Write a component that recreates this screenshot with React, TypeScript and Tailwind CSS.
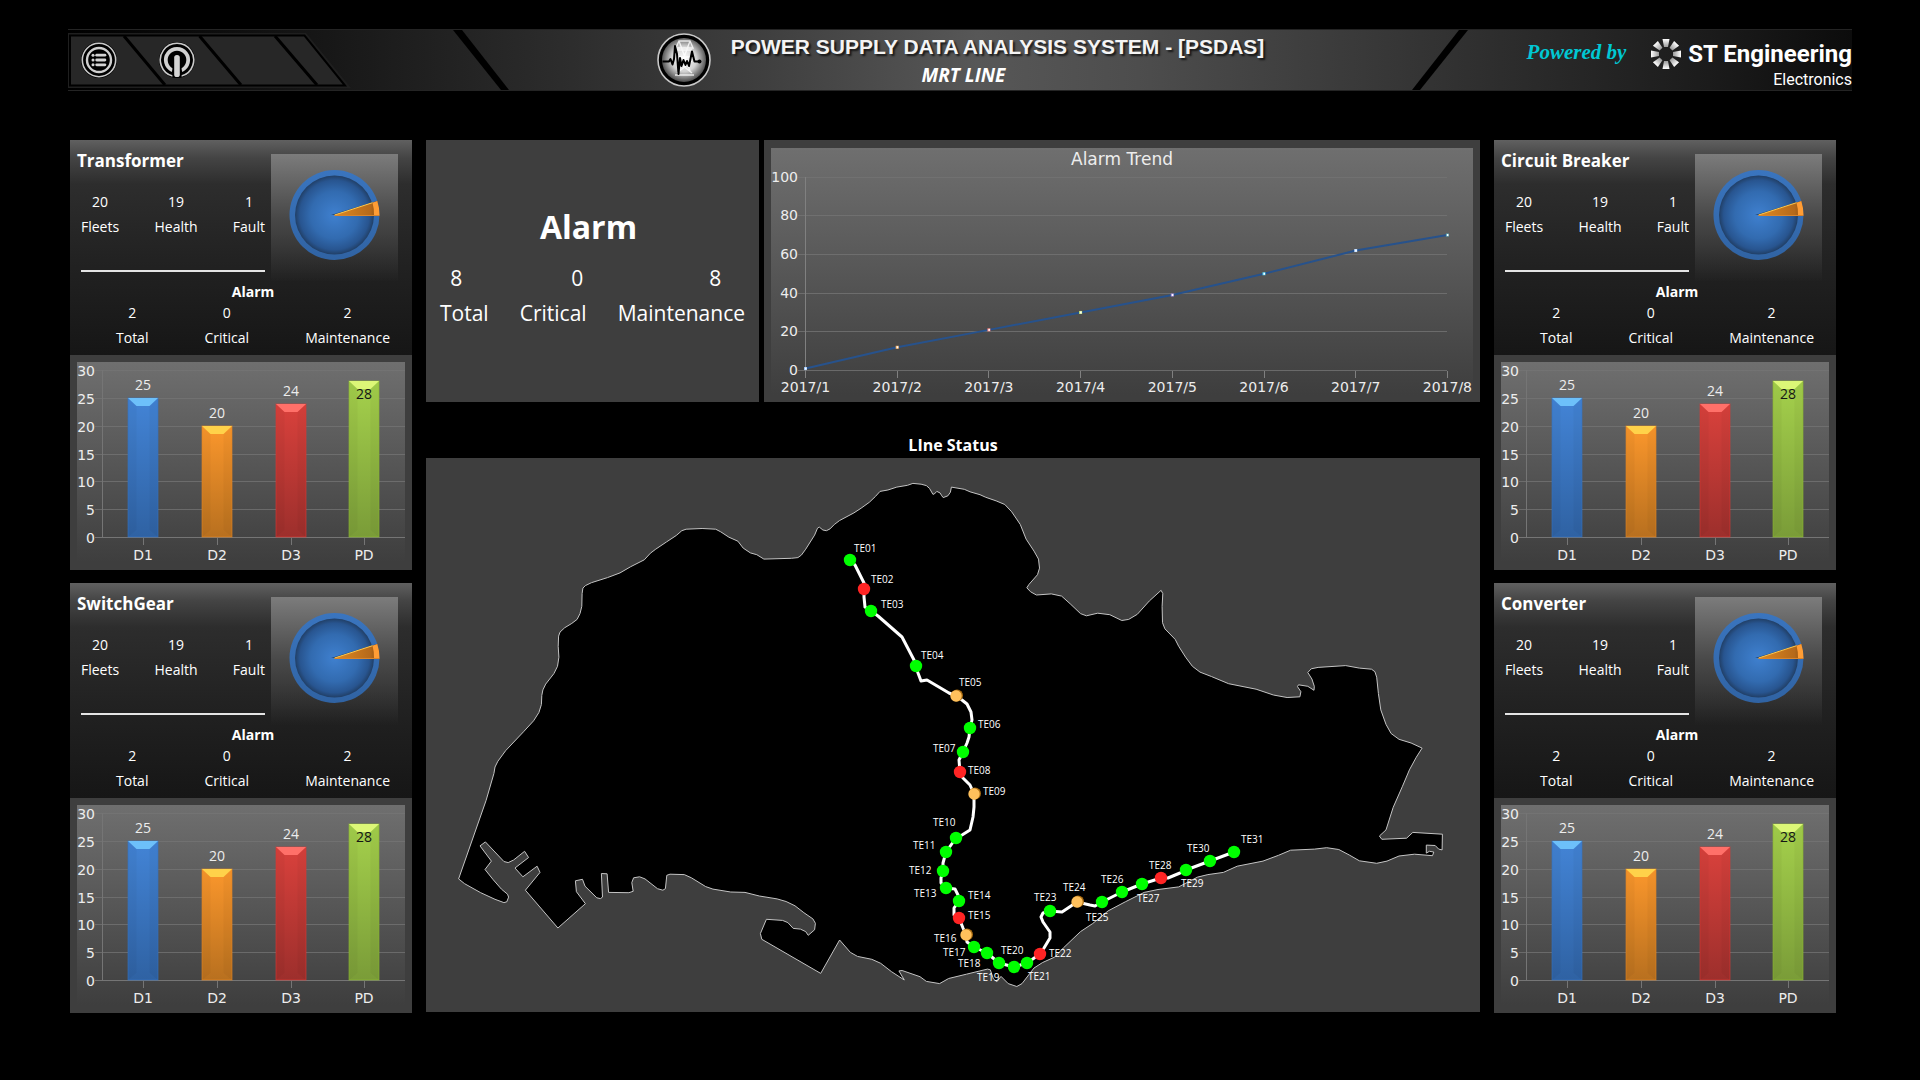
import React, { useId } from "react";

type Pt = [number, number];

/* ---------- Header pieces ---------- */

function MenuIcon() {
  return (
    <svg viewBox="0 0 36 36" className="size-9" aria-hidden="true">
      <circle cx="18" cy="18" r="18" fill="#000" />
      <circle cx="18" cy="18" r="16.7" fill="none" stroke="#c9c9c9" strokeWidth="1.6" />
      <circle cx="18" cy="18" r="12" fill="none" stroke="#cfcfcf" strokeWidth="2.4" />
      {[13.2, 18, 22.8].map((y) => (
        <g key={y} fill="#d4d4d4">
          <circle cx="12" cy={y} r="1.5" />
          <rect x="14.3" y={y - 1.4} width="11" height="2.8" rx="1.4" />
        </g>
      ))}
    </svg>
  );
}

function PowerIcon() {
  return (
    <svg viewBox="0 0 36 36" className="size-9" aria-hidden="true">
      <circle cx="18" cy="18" r="18" fill="#000" />
      <path d="M13.5 34.1A16.7 16.7 0 1 1 22.5 34.1" fill="none" stroke="#c9c9c9" strokeWidth="1.6" />
      <path d="M13.4 28.2A11.2 11.2 0 1 1 22.6 28.2" fill="none" stroke="#d0d0d0" strokeWidth="3.8" />
      <rect x="13.4" y="11.5" width="9.2" height="24.5" rx="4" fill="#000" />
      <rect x="15.2" y="13" width="5.6" height="22" rx="2.6" fill="#d4d4d4" />
    </svg>
  );
}

function Medallion() {
  return (
    <svg viewBox="0 0 54 54" className="size-[54px] shrink-0" aria-hidden="true">
      <defs>
        <radialGradient id="medal" cx="50%" cy="48%" r="52%">
          <stop offset="0" stopColor="#fff" />
          <stop offset="0.55" stopColor="#d2d2d2" />
          <stop offset="1" stopColor="#4a4a4a" />
        </radialGradient>
      </defs>
      <circle cx="27" cy="27" r="26" fill="#000" stroke="#c8c8c8" strokeWidth="1.6" />
      <circle cx="27" cy="27" r="22" fill="url(#medal)" />
      <g stroke="#fff" strokeWidth="1.4" fill="none" opacity="0.8">
        <path d="M22 8h11l3 7H19zM22 8l11 30M33 8L22 38M20 17h15M21 24h13M20 40l15-12M35 40L20 28M18 42h19" />
      </g>
      <path
        d="M5.500 28.500H12l1.500-2.500 2 5.500L17 26l1-13 2 8 1.500 20L23 25l1.500 8 2-6 2 5 1.500-4 2 5 3-14.500 2.500 10H42"
        fill="none"
        stroke="#000"
        strokeWidth="2"
        strokeLinejoin="round"
      />
      <circle cx="42.500" cy="28.500" r="2" fill="#000" />
    </svg>
  );
}

function PetalLogo() {
  return (
    <svg viewBox="0 0 32 32" className="size-8 shrink-0" aria-hidden="true">
      <defs>
        <linearGradient id="petal" x1="0" y1="0" x2="0" y2="1">
          <stop offset="0" stopColor="#fff" />
          <stop offset="1" stopColor="#9a9a9a" />
        </linearGradient>
      </defs>
      {[0, 45, 90, 135, 180, 225, 270, 315].map((a) => (
        <path key={a} d="M12.500 1h7l-1.500 8h-4z" fill="url(#petal)" transform={`rotate(${a} 16 16)`} />
      ))}
    </svg>
  );
}

function Header() {
  return (
    <header className="mx-[68px] flex h-[62px] items-stretch border-y border-[#242424] bg-[linear-gradient(90deg,#000_0%,#0a0a0a_6%,#1b1b1b_17%,#2b2b2b_27%,#3d3d3d_38%,#575757_51%,#4d4d4d_60%,#3a3a3a_72%,#2c2c2c_81%,#1b1b1b_92%,#0c0c0c_100%)]">
      <nav className="relative w-[385px] shrink-0">
        <svg viewBox="0 0 285 60" className="absolute left-0 top-0 h-[60px] w-[285px]" aria-hidden="true">
          <path d="M0 3H238L283 58H0Z" fill="#1f1f1f" />
          <path d="M2 5.500H236.500L277 55.500H2Z" fill="#272727" stroke="#000" strokeWidth="2" />
          <path d="M56 6L97 55M131.500 6L173 55M207 6L249 55" stroke="#000" strokeWidth="3" />
        </svg>
        <div className="relative flex h-full items-center gap-[42px] pl-[13px]">
          <button type="button" aria-label="Menu" className="rounded-full">
            <MenuIcon />
          </button>
          <button type="button" aria-label="Power" className="rounded-full">
            <PowerIcon />
          </button>
        </div>
      </nav>
      <svg viewBox="0 0 56 60" className="h-[60px] w-14 shrink-0" aria-hidden="true">
        <path d="M0 0H9L56 60H48Z" fill="#000" />
      </svg>
      <div className="flex min-w-0 flex-1 items-center justify-center gap-5">
        <Medallion />
        <div className="text-center">
          <h1 className="whitespace-nowrap pt-0.5 font-['Liberation_Sans'] text-[21px] font-bold leading-7 text-[#f4f4f4] [text-shadow:2px_2px_2px_rgba(0,0,0,0.7)]">
            POWER SUPPLY DATA ANALYSIS SYSTEM - [PSDAS]
          </h1>
          <p className="pr-[68px] text-[19px] font-bold italic leading-7">MRT LINE</p>
        </div>
      </div>
      <svg viewBox="0 0 56 60" className="h-[60px] w-14 shrink-0" aria-hidden="true">
        <path d="M56 0H47L0 60H8Z" fill="#000" />
      </svg>
      <div className="flex w-[384px] shrink-0 justify-end">
        <span className="mr-6 mt-1.5 whitespace-nowrap font-['Brush_Script_MT','Liberation_Serif',cursive] text-[21px] font-bold italic leading-8 text-[#00c8d4]">
          Powered by
        </span>
        <div className="mt-2">
          <PetalLogo />
        </div>
        <div className="ml-1.5 mt-2 text-right font-['Liberation_Sans_Narrow','Roboto',sans-serif] text-white">
          <div className="whitespace-nowrap text-[24px] font-bold leading-8">ST Engineering</div>
          <div className="text-[16px] leading-5">Electronics</div>
        </div>
      </div>
    </header>
  );
}

/* ---------- Equipment cards ---------- */

function Pie() {
  const id = useId();
  return (
    <svg viewBox="0 0 127 128" className="h-32 w-[127px]" role="img" aria-label="19 healthy, 1 fault">
      <defs>
        <radialGradient id={id + "core"}>
          <stop offset="0" stopColor="#3f80cf" />
          <stop offset="0.6" stopColor="#326bb0" />
          <stop offset="0.88" stopColor="#285590" />
          <stop offset="1" stopColor="#213f66" />
        </radialGradient>
        <linearGradient id={id + "rim"} x1="0" y1="0" x2="0" y2="1">
          <stop offset="0" stopColor="#3a75bf" />
          <stop offset="1" stopColor="#3063a3" />
        </linearGradient>
        <linearGradient id={id + "slice"}>
          <stop offset="0" stopColor="#e08a22" />
          <stop offset="0.8" stopColor="#b5691a" />
          <stop offset="1" stopColor="#8a4f12" />
        </linearGradient>
      </defs>
      <circle cx="63.500" cy="61" r="45" fill={`url(#${id}rim)`} />
      <circle cx="63.500" cy="61" r="39.500" fill={`url(#${id}core)`} />
      <path d="M60 61L106.300 47A45 45 0 0 1 108.500 61Z" fill="#1f3f68" />
      <path d="M63.500 61L106.300 47.100A45 45 0 0 1 108.500 61Z" fill={`url(#${id}slice)`} />
      <path d="M101.500 48.700L106.300 47.100A45 45 0 0 1 108.500 61H103A39.500 39.500 0 0 0 101.500 48.700Z" fill="#ff9d35" />
      <path d="M63.500 61L101.500 48.700" stroke="#ffc94d" strokeWidth="1" />
      <path d="M63.500 61.500H108.500" stroke="#d9842a" strokeWidth="1" />
    </svg>
  );
}

const BARS = [
  { name: "D1", value: 25, top: "#4384d6", bottom: "#2f62a3", edge: "#3575c4", cap: "#6dc0fa" },
  { name: "D2", value: 20, top: "#fb972c", bottom: "#b8701f", edge: "#e98a25", cap: "#ffd24a" },
  { name: "D3", value: 24, top: "#d9413c", bottom: "#9d2f2c", edge: "#e03a35", cap: "#ff7069" },
  { name: "PD", value: 28, top: "#a5d14c", bottom: "#7a9c38", edge: "#90c030", cap: "#dcf777" },
];

function BarChart() {
  const id = useId();
  const base = 182;
  const yOf = (v: number) => Math.round(base - v * 5.56);
  return (
    <svg viewBox="0 0 342 215" className="block w-full bg-[#3e3e3e]" role="img" aria-label="Bar chart D1 to PD">
      <defs>
        <linearGradient id={id + "bg"} x1="0" y1="0" x2="0" y2="1">
          <stop offset="0" stopColor="#6f6f6f" />
          <stop offset="1" stopColor="#3e3e3e" />
        </linearGradient>
        {BARS.map((b) => (
          <linearGradient key={b.name} id={id + b.name} x1="0" y1="0" x2="0" y2="1">
            <stop offset="0" stopColor={b.top} />
            <stop offset="1" stopColor={b.bottom} />
          </linearGradient>
        ))}
      </defs>
      <rect x="7" y="7" width="328" height="200" fill={`url(#${id}bg)`} />
      {[0, 5, 10, 15, 20, 25, 30].map((v) => (
        <g key={v}>
          <path d={`M25 ${yOf(v) + 0.5}H335`} stroke="#757575" strokeWidth="1" opacity={v === 0 ? 1 : 0.75} />
          <text x="25" y={yOf(v) + 6} textAnchor="end" className="fill-[#ededed] font-['DejaVu_Sans'] text-[14px]">
            {v}
          </text>
        </g>
      ))}
      <path d="M32.500 15V183" stroke="#757575" />
      {BARS.map((b, i) => {
        const cx = Math.round(73.3 + i * 73.7);
        const y = yOf(b.value);
        const l = cx - 15;
        const r = cx + 15;
        return (
          <g key={b.name}>
            <path d={`M${cx}.5 183V190`} stroke="#757575" />
            <rect x={l} y={y} width="30" height={182 - y} fill={`url(#${id}${b.name})`} stroke={b.edge} strokeOpacity="0.6" />
            <path d={`M${l + 8.5} ${y + 8}V175L${l} 182V${y}ZM${r - 8.5} ${y + 8}V175L${r} 182V${y}Z`} fill="#000" opacity="0.03" />
            <path d={`M${l} ${y}H${r}L${r - 8.5} ${y + 8}H${l + 8.5}Z`} fill={b.cap} />
            <text
              x={cx}
              y={b.name === "PD" ? y + 18 : y - 8}
              textAnchor="middle"
              className={b.name === "PD" ? "fill-[#151515] text-[14px]" : "fill-[#ededed] text-[14px]"}
            >
              {b.value}
            </text>
            <text x={cx} y="205" textAnchor="middle" className="fill-[#ededed] font-['DejaVu_Sans'] text-[14px]">
              {b.name}
            </text>
          </g>
        );
      })}
    </svg>
  );
}

function Stat({ value, label }: { value: number; label: string }) {
  return (
    <div className="flex flex-col-reverse items-center gap-[5px]">
      <dt>{label}</dt>
      <dd>{value}</dd>
    </div>
  );
}

function EquipmentCard({ title }: { title: string }) {
  return (
    <section className="flex flex-col text-[14px] leading-5">
      <div className="h-[215px] bg-[linear-gradient(180deg,#606060_0px,#444_18px,#2d2d2d_44px,#222_120px,#161616_215px)]">
        <div className="flex justify-between pr-3.5">
          <div className="w-[195px]">
            <h2 className="pl-[7px] pt-[9px] text-[17px] font-bold leading-6">{title}</h2>
            <dl className="ml-[11px] mt-[19px] flex justify-between">
              <Stat value={20} label="Fleets" />
              <Stat value={19} label="Health" />
              <Stat value={1} label="Fault" />
            </dl>
            <hr className="ml-[11px] mt-[33px] border-t-2 border-[#e4e4e4]" />
          </div>
          <div className="mt-3.5 bg-linear-to-b from-[#7c7c7c] via-[#484848] to-transparent">
            <Pie />
          </div>
        </div>
        <h3 className="pl-6 text-center font-bold">Alarm</h3>
        <dl className="mt-px flex justify-between pl-[46px] pr-[22px]">
          <Stat value={2} label="Total" />
          <Stat value={0} label="Critical" />
          <Stat value={2} label="Maintenance" />
        </dl>
      </div>
      <BarChart />
    </section>
  );
}

/* ---------- Alarm summary and trend ---------- */

const TREND = [
  { month: "2017/1", value: 1, dot: "#9cc4f5" },
  { month: "2017/2", value: 12, dot: "#ffb45e" },
  { month: "2017/3", value: 21, dot: "#ff7d78" },
  { month: "2017/4", value: 30, dot: "#c8ea7c" },
  { month: "2017/5", value: 39, dot: "#a58be0" },
  { month: "2017/6", value: 50, dot: "#4fd0f0" },
  { month: "2017/7", value: 62, dot: "#b8d8ff" },
  { month: "2017/8", value: 70, dot: "#5aa9b8" },
];

function TrendChart() {
  const x = (i: number) => 41.5 + i * 91.7;
  const y = (v: number) => 230.5 - v * 1.935;
  return (
    <svg viewBox="0 0 716 262" className="block h-[262px] w-full bg-[#3e3e3e]" role="img" aria-label="Alarm Trend">
      <defs>
        <linearGradient id="trendBg" x1="0" y1="0" x2="0" y2="1">
          <stop offset="0" stopColor="#6f6f6f" />
          <stop offset="1" stopColor="#3e3e3e" />
        </linearGradient>
      </defs>
      <rect x="7" y="8" width="702" height="247" fill="url(#trendBg)" />
      <text x="358" y="25" textAnchor="middle" className="fill-[#ededed] font-['DejaVu_Sans'] text-[17px]">
        Alarm Trend
      </text>
      {[0, 20, 40, 60, 80, 100].map((v) => (
        <g key={v}>
          <path d={`M34 ${Math.floor(y(v)) + 0.5}H683`} stroke="#747474" opacity="0.8" />
          <text x="34" y={Math.floor(y(v)) + 5} textAnchor="end" className="fill-[#ededed] font-['DejaVu_Sans'] text-[14px]">
            {v}
          </text>
        </g>
      ))}
      <path d="M41.500 37V231" stroke="#808080" />
      <polyline points={TREND.map((t, i) => `${x(i)},${y(t.value)}`).join(" ")} fill="none" stroke="#27528c" strokeWidth="2" />
      {TREND.map((t, i) => (
        <g key={t.month}>
          <path d={`M${Math.floor(x(i)) + 0.5} 231V238`} stroke="#808080" />
          <rect x={x(i) - 1.5} y={y(t.value) - 1.5} width="3" height="3" fill={t.dot} />
          <rect x={x(i) - 0.5} y={y(t.value) - 1} width="1.500" height="2" fill="#fff" />
          <text x={x(i)} y="252" textAnchor="middle" className="fill-[#ededed] font-['DejaVu_Sans'] text-[14px]">
            {t.month}
          </text>
        </g>
      ))}
    </svg>
  );
}

function AlarmSummary() {
  const items = [
    { label: "Total", value: 8, pad: "pr-4" },
    { label: "Critical", value: 0, pad: "pl-12" },
    { label: "Maintenance", value: 8, pad: "pl-[68px]" },
  ];
  return (
    <section className="bg-[#3e3e3e] px-3.5 pt-16 text-[21px] leading-7">
      <h2 className="pr-2 text-center text-[32px] font-bold leading-[46px]">Alarm</h2>
      <dl className="mt-3.5 flex justify-between">
        {items.map((it) => (
          <div key={it.label} className="flex flex-col-reverse gap-[7px] text-center">
            <dt>{it.label}</dt>
            <dd className={it.pad}>{it.value}</dd>
          </div>
        ))}
      </dl>
    </section>
  );
}

/* ---------- Line status map ---------- */

const WEST_COAST: Pt[] = [
  [1568, 123], [1540, 115], [1524, 108], [1488, 102], [1485, 116], [1478, 126], [1465, 131], [1461, 126], [1456, 118],
  [1447, 114], [1440, 121], [1436, 122], [1427, 106], [1418, 98], [1403, 94], [1380, 92], [1365, 97], [1335, 102],
  [1310, 110], [1288, 114], [1275, 128], [1258, 144], [1235, 160], [1215, 173], [1175, 194], [1160, 205], [1148, 217],
  [1138, 222], [1128, 220], [1118, 212], [1113, 215], [1105, 234], [1080, 273], [1068, 289], [1058, 296], [1040, 298],
  [963, 300], [943, 288], [925, 283], [905, 270], [890, 251], [865, 240], [842, 225], [828, 218], [790, 216], [745, 218],
  [733, 222], [718, 235], [690, 253], [660, 273], [645, 284], [628, 302], [590, 321], [560, 338], [525, 351], [480, 365],
  [463, 373], [456, 380], [454, 395], [453, 430], [448, 450], [440, 466], [425, 477], [405, 489], [392, 501], [388, 512],
  [387, 540], [389, 570], [385, 595], [375, 615], [352, 644], [344, 660], [341, 675], [340, 700], [333, 722], [318, 745],
  [290, 775], [240, 827], [218, 856], [210, 872], [207, 890], [185, 964], [108, 1180], [125, 1193], [170, 1218],
  [210, 1236], [235, 1245], [243, 1243], [248, 1230], [245, 1222], [228, 1208], [205, 1182], [182, 1154], [200, 1131],
  [168, 1089], [183, 1078], [235, 1132], [247, 1135], [262, 1128], [293, 1104], [304, 1121], [266, 1150], [288, 1174],
  [328, 1145], [336, 1162], [295, 1211], [386, 1315], [463, 1248], [438, 1215], [435, 1185], [455, 1181], [462, 1200],
  [495, 1232], [505, 1234], [511, 1230], [508, 1165], [524, 1166], [528, 1217], [585, 1218], [597, 1214], [593, 1190],
  [598, 1177], [615, 1174], [630, 1180], [665, 1207], [680, 1211], [687, 1207], [691, 1170], [700, 1167], [740, 1168],
  [760, 1177], [800, 1201], [820, 1208], [870, 1216], [910, 1217], [950, 1227], [1000, 1235], [1025, 1242], [1050, 1254],
  [1075, 1273], [1100, 1290], [1107, 1302], [1105, 1320], [1087, 1335], [1080, 1325], [1065, 1318], [1045, 1316],
  [1030, 1300], [1015, 1294], [970, 1291], [953, 1330], [957, 1346], [1122, 1440], [1175, 1348], [1205, 1382],
  [1225, 1393], [1265, 1401], [1290, 1412], [1320, 1435], [1356, 1458], [1341, 1433], [1350, 1432], [1400, 1449],
  [1418, 1462], [1455, 1468], [1480, 1454], [1530, 1442], [1568, 1433],
];

const EAST_COAST: Pt[] = [
  [80, 1428], [88, 1430], [97, 1455], [107, 1463], [119, 1448], [140, 1468], [165, 1476], [180, 1468], [215, 1425],
  [240, 1410], [275, 1395], [300, 1370], [350, 1325], [385, 1303], [430, 1268], [480, 1243], [535, 1217], [575, 1209],
  [635, 1202], [690, 1175], [720, 1168], [765, 1162], [805, 1145], [880, 1131], [925, 1115], [960, 1101], [1030, 1098],
  [1065, 1094], [1100, 1099], [1130, 1114], [1160, 1130], [1210, 1137], [1240, 1131], [1275, 1117], [1320, 1112],
  [1372, 1116], [1376, 1106], [1363, 1104], [1354, 1109], [1354, 1087], [1380, 1088], [1390, 1098], [1400, 1100],
  [1401, 1057], [1315, 1052], [1297, 1068], [1225, 1071], [1218, 1062], [1237, 1045], [1258, 983], [1285, 925],
  [1305, 880], [1325, 845], [1342, 820], [1310, 806], [1275, 796], [1252, 780], [1237, 755], [1222, 715], [1215, 670],
  [1210, 625], [1205, 610], [1195, 603], [1160, 600], [1120, 593], [1040, 598], [1020, 602], [1010, 612], [1022, 630],
  [1029, 650], [1028, 661], [1010, 650], [983, 646], [980, 651], [990, 665], [987, 679], [950, 681], [910, 674],
  [860, 658], [780, 643], [730, 623], [697, 611], [675, 595], [655, 570], [635, 540], [625, 521], [595, 492], [588, 475],
  [587, 430], [589, 395], [584, 386], [550, 415], [515, 452], [490, 466], [470, 469], [435, 453], [400, 449], [367, 456],
  [350, 450], [320, 423], [295, 402], [265, 396], [222, 399], [205, 390], [194, 379], [200, 370], [225, 343], [231, 325],
  [228, 300], [215, 278], [192, 245], [175, 205], [150, 170], [130, 150], [105, 140], [75, 130],
];

const project = (pts: Pt[], offset: number, scale: number) =>
  pts.map(([px, py]) => `${(offset + px / scale).toFixed(1)},${(py / 2.751 - 9).toFixed(1)}`);

const COAST = [...project(WEST_COAST, -6, 2.8), ...project(EAST_COAST, 534, 2.904)].join(" ");

const TRACK =
  "424,101 429,106 438,124 438,138 439,148 445,152 452,157 476,178 488,201 492,214 495,222 501,221 523,234 530,237 536,241 541,245 545,253 546,261 544,269 543,278 541,284 537,293 533,301 534,313 537,319 544,326 548,335 548,348 547,358 544,371 536,376 530,379 520,393 517,404 517,412 515,419 515,424 520,429 529,430 532,436 533,442 528,449 528,456 533,459 537,469 540,476 541,483 548,488 561,494 573,504 588,508 601,504 614,495 618,489 624,479 624,473 617,463 615,458 617,454 624,452 636,453 651,443 664,446 669,447 676,443 696,433 716,425 735,419 742,419 754,414 760,411 784,402 808,393";

const OK = "#00ff00";
const BAD = "#ff2424";
const WARN = "#ffc05c";

/* code, dot x, dot y, label x, label baseline, state */
const STATIONS: [string, number, number, number, number, string][] = [
  ["TE01", 424, 101, 428, 93, OK],
  ["TE02", 438, 130, 445, 124, BAD],
  ["TE03", 445, 152, 455, 149, OK],
  ["TE04", 490, 207, 495, 200, OK],
  ["TE05", 530, 237, 533, 227, WARN],
  ["TE06", 544, 269, 552, 269, OK],
  ["TE07", 537, 293, 507, 293, OK],
  ["TE08", 534, 313, 542, 315, BAD],
  ["TE09", 548, 335, 557, 336, WARN],
  ["TE10", 530, 379, 507, 367, OK],
  ["TE11", 520, 393, 487, 390, OK],
  ["TE12", 517, 412, 483, 415, OK],
  ["TE13", 520, 429, 488, 438, OK],
  ["TE14", 533, 442, 542, 440, OK],
  ["TE15", 533, 459, 542, 460, BAD],
  ["TE16", 540, 476, 508, 483, WARN],
  ["TE17", 548, 488, 517, 497, OK],
  ["TE18", 561, 494, 532, 508, OK],
  ["TE19", 573, 504, 551, 522, OK],
  ["TE20", 588, 508, 575, 495, OK],
  ["TE21", 601, 504, 602, 521, OK],
  ["TE22", 614, 495, 623, 498, BAD],
  ["TE23", 624, 452, 608, 442, OK],
  ["TE24", 651, 443, 637, 432, WARN],
  ["TE25", 676, 443, 660, 462, OK],
  ["TE26", 696, 433, 675, 424, OK],
  ["TE27", 716, 425, 711, 443, OK],
  ["TE28", 735, 419, 723, 410, BAD],
  ["TE29", 760, 411, 755, 428, OK],
  ["TE30", 784, 402, 761, 393, OK],
  ["TE31", 808, 393, 815, 384, OK],
];

function LineMap() {
  return (
    <svg viewBox="0 -1 1054 554" className="block h-[554px] w-full bg-[#3e3e3e]" role="img" aria-label="Line status map">
      <polygon points={COAST} fill="#000" stroke="#c4c4c4" strokeWidth="1" strokeLinejoin="round" />
      <polyline points={TRACK} fill="none" stroke="#fff" strokeWidth="3" strokeLinejoin="round" />
      {STATIONS.map(([code, cx, cy, lx, ly, fill]) => (
        <g key={code}>
          {fill === WARN && <circle cx={cx + 1} cy={cy - 0.5} r="6" fill="#a86a10" />}
          <circle cx={cx} cy={cy} r={fill === WARN ? 5.7 : 6.2} fill={fill} />
          <text x={lx} y={ly} className="fill-white text-[10px]">
            {code}
          </text>
        </g>
      ))}
    </svg>
  );
}

export default function App() {
  return (
    <div className="min-h-screen bg-black pt-[29px] font-['Open_Sans','Noto_Sans',sans-serif] text-white">
      <Header />
      <main className="mt-[49px] grid grid-cols-[342px_1fr_342px] gap-x-3.5 pb-16 pl-[70px] pr-[84px]">
        <div className="flex flex-col gap-[13px]">
          <EquipmentCard title="Transformer" />
          <EquipmentCard title="SwitchGear" />
        </div>
        <div className="flex min-w-0 flex-col">
          <div className="grid grid-cols-[333px_1fr] gap-[5px]">
            <AlarmSummary />
            <TrendChart />
          </div>
          <h2 className="mt-[31px] text-center text-[16px] font-bold leading-6">LIne Status</h2>
          <div className="mt-px">
            <LineMap />
          </div>
        </div>
        <div className="flex flex-col gap-[13px]">
          <EquipmentCard title="Circuit Breaker" />
          <EquipmentCard title="Converter" />
        </div>
      </main>
    </div>
  );
}
